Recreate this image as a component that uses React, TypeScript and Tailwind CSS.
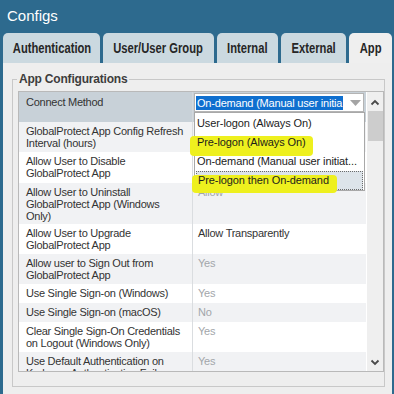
import React from 'react'

type Row = {
  label: string[]
  value?: string
  dark?: boolean
  h: string
  bg: string
}

const tabs = [
  { label: 'Authentication', w: 'w-[97px]' },
  { label: 'User/User Group', w: 'w-[111px]' },
  { label: 'Internal', w: 'w-[61px]' },
  { label: 'External', w: 'w-[65px]' },
  { label: 'App', w: 'w-[43px]', active: true },
]

// values of rows 2 and 3 sit under the open dropdown, so they are left empty
const rows: Row[] = [
  { label: ['GlobalProtect App Config Refresh', 'Interval (hours)'], h: 'h-[30px]', bg: 'bg-[#f1f2f4]' },
  { label: ['Allow User to Disable', 'GlobalProtect App'], h: 'h-[31px]', bg: 'bg-white' },
  { label: ['Allow User to Uninstall', 'GlobalProtect App (Windows', 'Only)'], value: 'Allow', h: 'h-[41px]', bg: 'bg-[#f1f2f4]' },
  { label: ['Allow User to Upgrade', 'GlobalProtect App'], value: 'Allow Transparently', dark: true, h: 'h-[30px]', bg: 'bg-white' },
  { label: ['Allow user to Sign Out from', 'GlobalProtect App'], value: 'Yes', h: 'h-[30px]', bg: 'bg-[#f1f2f4]' },
  { label: ['Use Single Sign-on (Windows)'], value: 'Yes', h: 'h-[19px]', bg: 'bg-white' },
  { label: ['Use Single Sign-on (macOS)'], value: 'No', h: 'h-[19px]', bg: 'bg-[#f1f2f4]' },
  { label: ['Clear Single Sign-On Credentials', 'on Logout (Windows Only)'], value: 'Yes', h: 'h-[30px]', bg: 'bg-white' },
  { label: ['Use Default Authentication on', 'Kerberos Authentication Failure'], value: 'Yes', h: 'h-[30px]', bg: 'bg-[#f1f2f4]' },
]

const options = [
  { label: 'User-logon (Always On)' },
  { label: 'Pre-logon (Always On)', mark: 'w-[123px] h-[20px] top-[3px]' },
  { label: 'On-demand (Manual user initiat...' },
  { label: 'Pre-logon then On-demand', mark: 'w-[145px] h-[18px] top-[3px]', selected: true },
]

function Chevron({ down }: { down?: boolean }) {
  return (
    <svg width="10" height="7" viewBox="0 0 10 7" className="block">
      <polyline
        points={down ? '1.5,1.5 5,5 8.5,1.5' : '1.5,5.5 5,2 8.5,5.5'}
        fill="none"
        stroke="#4a4a4a"
        strokeWidth="1.8"
      />
    </svg>
  )
}

function ConnectSelect() {
  return (
    <div className="relative w-[170px] h-[19px] bg-white border border-[#b4b4b4] flex items-center">
      <span className="ml-[1px] w-[147px] h-[14px] overflow-hidden whitespace-nowrap bg-[#0f6fcf] text-white text-[11px] leading-[14px] pl-[1px] tracking-[-0.2px]">
        On-demand (Manual user initia
      </span>
      <svg width="11" height="6" viewBox="0 0 11 6" className="ml-[7px]">
        <polygon points="0,0 11,0 5.5,6" fill="#a4a4a4" />
      </svg>

      {/* open dropdown list */}
      <div className="absolute left-[-1px] top-[18px] w-[171px] bg-white border border-[#a8a8a8] pt-[1px] z-10">
        {options.map((o) => (
          <div
            key={o.label}
            className={
              o.selected
                ? 'relative h-[19px] mx-[1px] border border-dotted border-[#6b6b6b] bg-[#dde4ea] pl-[1px] leading-[17px]'
                : 'relative h-[19px] pl-[2px] leading-[19px]'
            }
          >
            {o.mark && (
              <span className={`absolute left-[-5px] rounded-[4px] bg-[#eef01e] ${o.mark}`} />
            )}
            <span className="relative text-[11px] text-[#1c1c1c] whitespace-nowrap tracking-[-0.1px]">{o.label}</span>
          </div>
        ))}
      </div>
    </div>
  )
}

export default function App() {
  return (
    <div className="w-[394px] h-[394px] overflow-hidden bg-[#2d6a8e] flex flex-col font-['Liberation_Sans',Arial,sans-serif]">
      {/* title bar */}
      <div className="h-[33px] pl-[7px] pt-[7px] text-white text-[15px] leading-[17px]">Configs</div>

      {/* tabs */}
      <div className="h-[30px] flex gap-[3px] pl-[3px]">
        {tabs.map((t) => (
          <div
            key={t.label}
            className={`${t.w} rounded-t-[5px] flex items-center justify-center ${t.active ? 'bg-[#efefef]' : 'bg-[#cbd9e0]'}`}
          >
            <span className="inline-block scale-x-[0.8] text-[14px] font-bold text-[#262626] whitespace-nowrap">{t.label}</span>
          </div>
        ))}
      </div>

      {/* panel */}
      <div className="flex-1 ml-[3px] mr-[2px] bg-[#eeeeee] pl-[9px] pr-[7px] pt-[9px]">
        <fieldset className="border border-[#c8c8c8] pl-[5px] pr-0 pt-[5px] pb-[14px]">
          <legend className="ml-[-1px] px-[2px] text-[12px] font-bold leading-[14px] text-[#3d3d3d] tracking-[-0.2px]">App Configurations</legend>

          <div className="h-[281px] border border-[#b9b9b9] flex overflow-hidden">
            {/* rows */}
            <div className="w-[347px] flex flex-col text-[11px] leading-[12px] tracking-[-0.25px]">
              <div className="relative z-10 h-[30px] flex shrink-0 bg-[#c8d1d8]">
                <div className="w-[174px] border-r border-[#d3d8dc] pl-[7px] pt-[4px] text-[#333]">Connect Method</div>
                <div className="flex-1 pl-[1px] pt-[1px]">
                  <ConnectSelect />
                </div>
              </div>
              {rows.map((r, i) => (
                <div key={i} className={`${r.h} ${r.bg} flex shrink-0`}>
                  <div className="w-[174px] border-r border-[#dadde0] pl-[7px] pt-[3px] text-[#333] whitespace-nowrap">
                    {r.label.map((l) => (
                      <div key={l}>{l}</div>
                    ))}
                  </div>
                  <div className={`flex-1 pl-[5px] pt-[3px] ${r.dark ? 'text-[#333]' : 'text-[#a2a6aa]'}`}>{r.value}</div>
                </div>
              ))}
            </div>

            {/* scrollbar */}
            <div className="flex-1 border-l border-white bg-[#efefef] flex flex-col items-center pt-[7px] pb-[5px]">
              <Chevron />
              <div className="w-[15px] h-[30px] mt-[5px] bg-[#cdcdcd]" />
              <div className="flex-1" />
              <Chevron down />
            </div>
          </div>
        </fieldset>
      </div>
    </div>
  )
}
